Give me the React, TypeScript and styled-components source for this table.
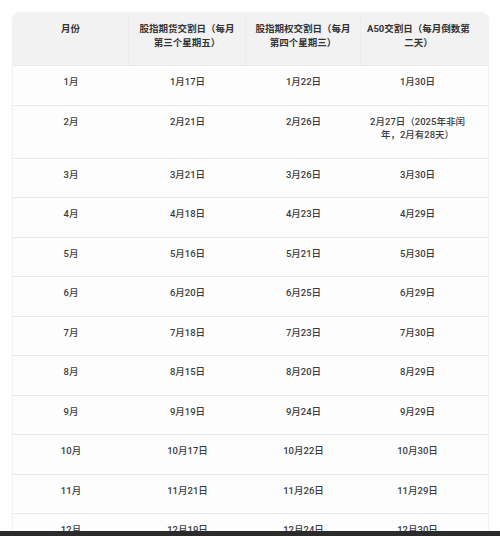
import styled, { createGlobalStyle } from 'styled-components'

const GlobalStyle = createGlobalStyle`
  html, body {
    margin: 0;
    padding: 0;
    background: #ffffff;
  }
  body {
    font-family: Roboto, 'Noto Sans CJK SC', sans-serif;
    color: #3a3a3a;
  }
`

type TRow = {
  month: string
  futures: string
  options: string
  a50: string[]
}

const rows: TRow[] = [
  { month: '1月', futures: '1月17日', options: '1月22日', a50: ['1月30日'] },
  { month: '2月', futures: '2月21日', options: '2月26日', a50: ['2月27日（2025年非闰', '年，2月有28天）'] },
  { month: '3月', futures: '3月21日', options: '3月26日', a50: ['3月30日'] },
  { month: '4月', futures: '4月18日', options: '4月23日', a50: ['4月29日'] },
  { month: '5月', futures: '5月16日', options: '5月21日', a50: ['5月30日'] },
  { month: '6月', futures: '6月20日', options: '6月25日', a50: ['6月29日'] },
  { month: '7月', futures: '7月18日', options: '7月23日', a50: ['7月30日'] },
  { month: '8月', futures: '8月15日', options: '8月20日', a50: ['8月29日'] },
  { month: '9月', futures: '9月19日', options: '9月24日', a50: ['9月29日'] },
  { month: '10月', futures: '10月17日', options: '10月22日', a50: ['10月30日'] },
  { month: '11月', futures: '11月21日', options: '11月26日', a50: ['11月29日'] },
  { month: '12月', futures: '12月19日', options: '12月24日', a50: ['12月30日'] },
]

const headers = [
  ['月份'],
  ['股指期货交割日（每月', '第三个星期五）'],
  ['股指期权交割日（每月', '第四个星期三）'],
  ['A50交割日（每月倒数第', '二天）'],
]

const Lines = ({ lines }: { lines: string[] }) => (
  <>
    {lines.map((l, i) => (
      <span key={i}>
        {l}
        {i < lines.length - 1 && <br />}
      </span>
    ))}
  </>
)

const App = () => {
  return (
    <Screen>
      <GlobalStyle />
      <Content>
        <Table>
          <HeadRow>
            {headers.map((h, i) => (
              <HeadCell key={i} last={i === 3}>
                <Lines lines={h} />
              </HeadCell>
            ))}
          </HeadRow>
          {rows.map((r) => (
            <Row key={r.month}>
              <Cell>{r.month}</Cell>
              <Cell>{r.futures}</Cell>
              <Cell>{r.options}</Cell>
              <Cell last>
                <Lines lines={r.a50} />
              </Cell>
            </Row>
          ))}
        </Table>
      </Content>
      <NavBar />
    </Screen>
  )
}

export default App

const Screen = styled.div`
  width: 500px;
  height: 536px;
  display: flex;
  flex-direction: column;
  overflow: hidden;
`

const Content = styled.div`
  flex: 1;
  overflow: hidden;
  padding: 13px 12px 0 13px;
`

const NavBar = styled.div`
  height: 5px;
  background: #2b2b2b;
`

const Table = styled.div`
  border-radius: 7px 7px 0 0;
  box-shadow: 0 0 2px 1px rgba(0, 0, 0, 0.07);
  background: #fdfdfd;
  overflow: hidden;
`

const RowBase = styled.div`
  display: grid;
  grid-template-columns: 116px 117px 115px 1fr;
  border-bottom: 1px solid #e8e8e8;
`

const HeadRow = styled(RowBase)`
  background: #f2f2f2;
`

const Row = styled(RowBase)``

const Cell = styled.div<{ last?: boolean }>`
  padding: ${(p) => (p.last ? '9px 20px 16px 6px' : '9px 8px 16px')};
  font-size: 9.5px;
  line-height: 13.5px;
  text-align: center;
  font-weight: 500;
  color: #3c3c3c;
  white-space: nowrap;
`

const HeadCell = styled(Cell)`
  font-weight: 700;
  color: #333333;
  border-right: 1px solid #ececec;

  &:last-child {
    border-right: none;
  }
`
